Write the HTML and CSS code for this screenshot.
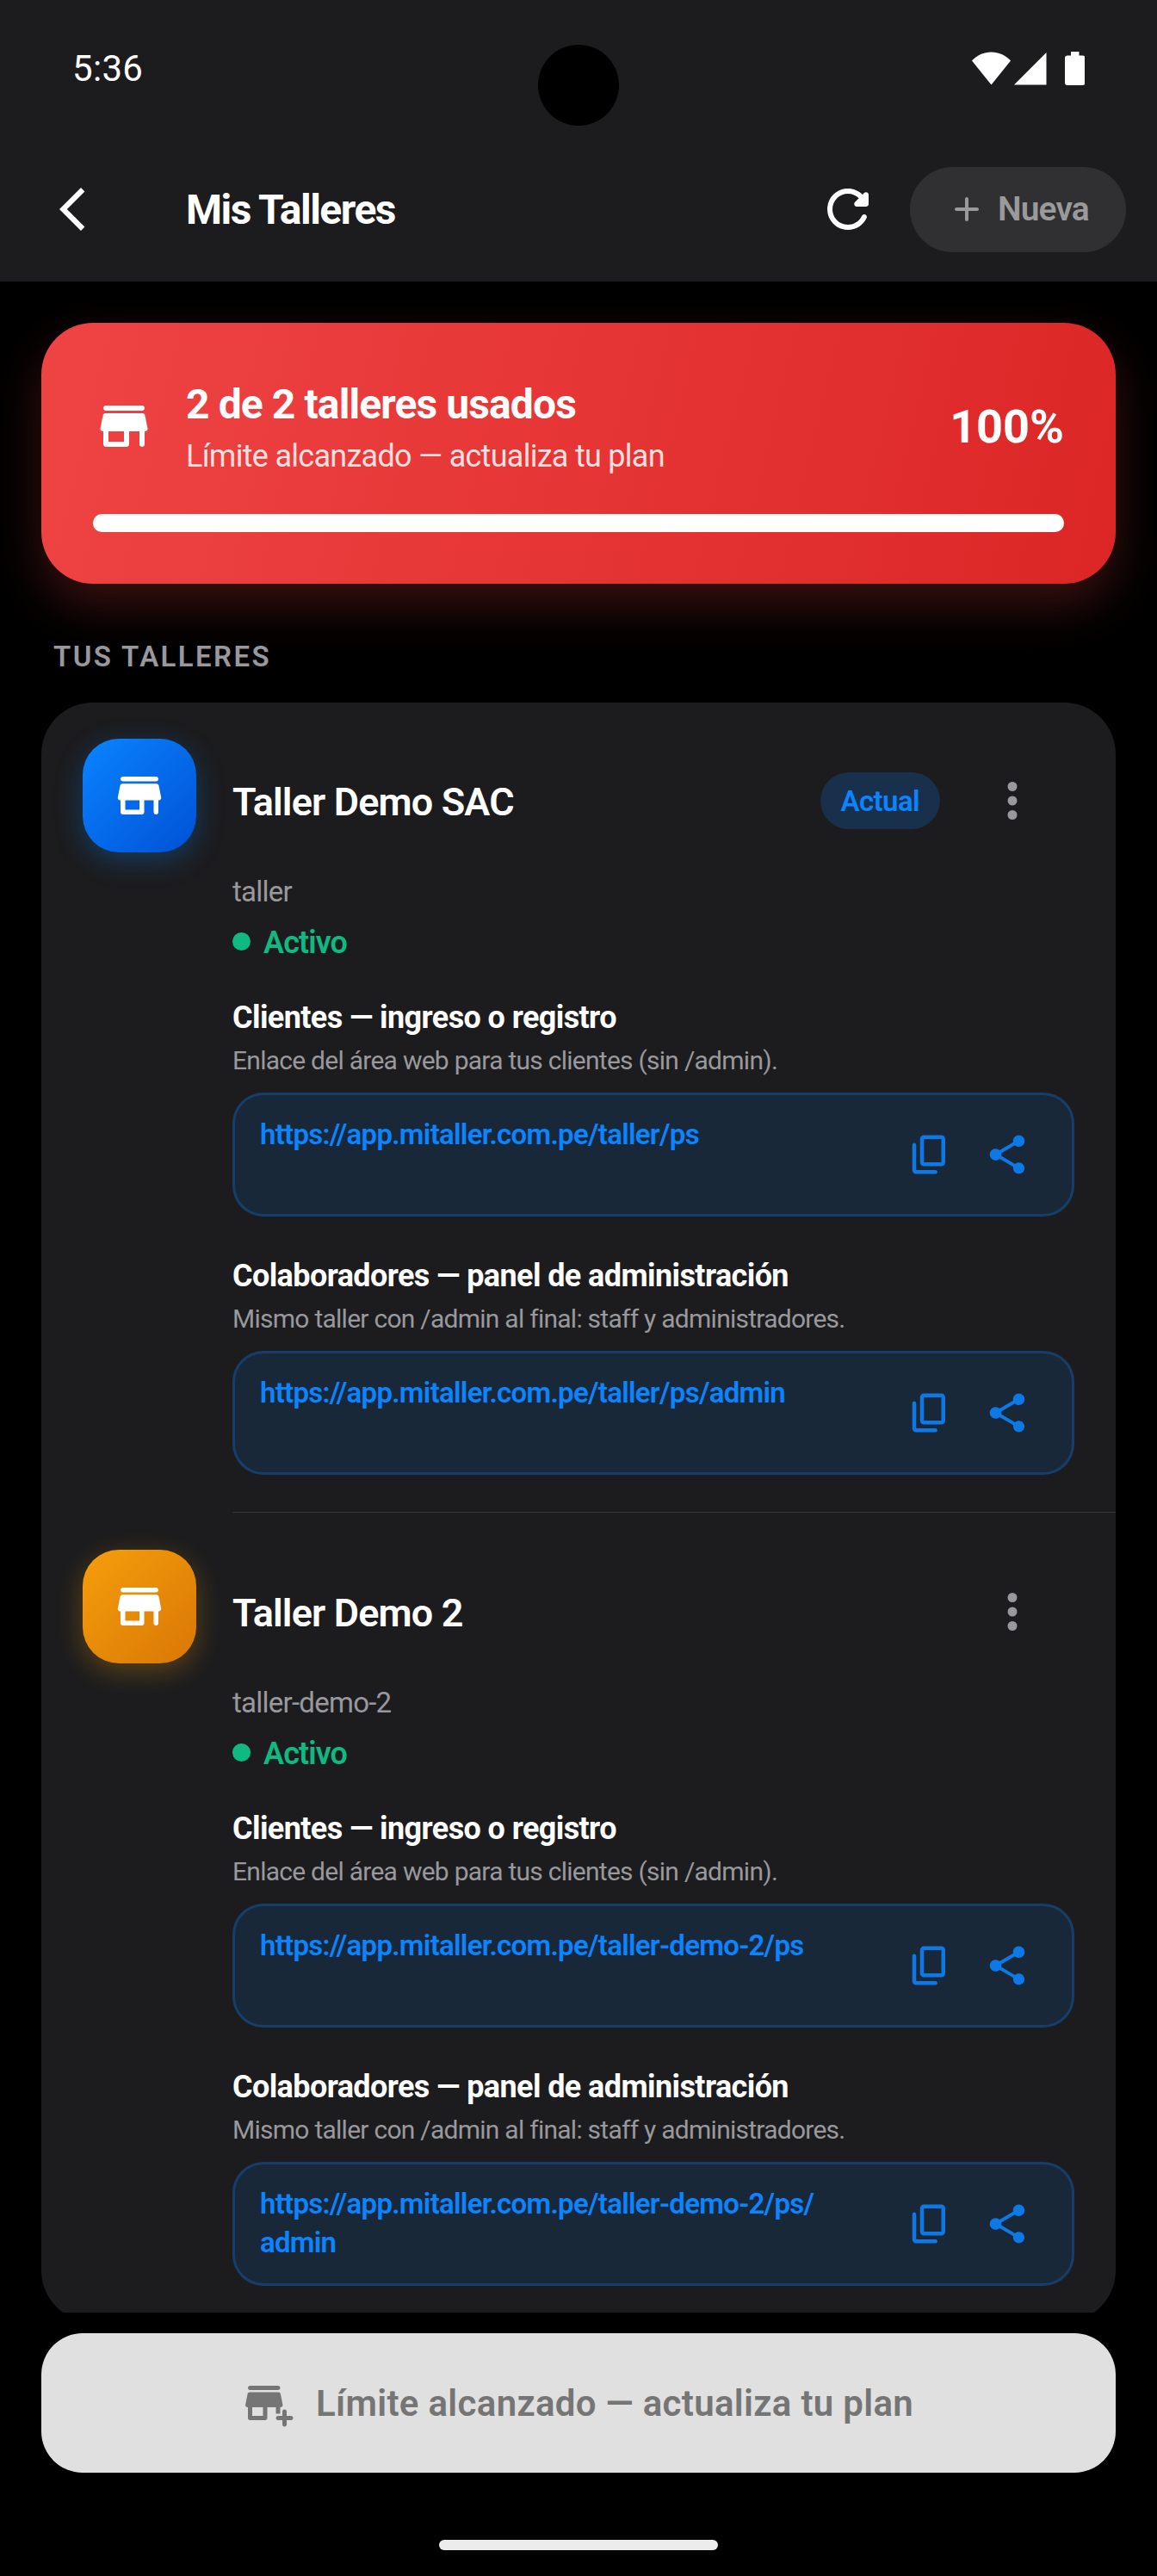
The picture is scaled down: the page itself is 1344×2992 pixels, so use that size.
FILE: index.html
```html
<!DOCTYPE html>
<html lang="es">
  <head>
    <meta charset="UTF-8" />
    <meta name="viewport" content="width=device-width, initial-scale=1.0" />
    <title>Mis Talleres</title>
    <link rel="stylesheet" href="styles.css">
  </head>
  <body>
    <svg class="sprite" width="0" height="0">
      <symbol id="store" viewBox="0 0 24 24">
        <path d="M5 6h14c.55 0 1-.45 1-1s-.45-1-1-1H5c-.55 0-1 .45-1 1s.45 1 1 1zm15.16 1.8c-.09-.46-.5-.8-.98-.8H4.82c-.48 0-.89.34-.98.8l-1 5c-.12.62.35 1.2.98 1.2H4v5c0 .55.45 1 1 1h8c.55 0 1-.45 1-1v-5h4v5c0 .55.45 1 1 1s1-.45 1-1v-5h.18c.63 0 1.1-.58.98-1.2l-1-5zM12 18H6v-4h6v4z" />
      </symbol>
      <symbol id="more" viewBox="0 0 24 24">
        <circle cx="12" cy="6" r="2" />
        <circle cx="12" cy="12" r="2" />
        <circle cx="12" cy="18" r="2" />
      </symbol>
      <symbol id="copy" viewBox="0 0 24 24">
        <path d="M15 20H5V7c0-.55-.45-1-1-1s-1 .45-1 1v13c0 1.1.9 2 2 2h10c.55 0 1-.45 1-1s-.45-1-1-1zm5-4V4c0-1.1-.9-2-2-2H9c-1.1 0-2 .9-2 2v12c0 1.1.9 2 2 2h9c1.1 0 2-.9 2-2zm-2 0H9V4h9v12z" />
      </symbol>
      <symbol id="share" viewBox="0 0 24 24">
        <path d="M18 16.08c-.76 0-1.44.3-1.96.77L8.91 12.7c.05-.23.09-.46.09-.7s-.04-.47-.09-.7l7.05-4.11c.54.5 1.25.81 2.04.81 1.66 0 3-1.34 3-3s-1.34-3-3-3-3 1.34-3 3c0 .24.04.47.09.7L8.04 9.81C7.5 9.31 6.79 9 6 9c-1.66 0-3 1.34-3 3s1.34 3 3 3c.79 0 1.5-.31 2.04-.81l7.12 4.16c-.05.21-.08.43-.08.65 0 1.61 1.31 2.92 2.92 2.92s2.92-1.31 2.92-2.92-1.31-2.92-2.92-2.92z" />
      </symbol>
    </svg>

    <header class="top">
      <div class="status-bar">
        <span class="clock">5:36</span>
        <svg class="signals" viewBox="0 0 131 39">
          <path d="M0 10.500C6 4 14 .5 22.500.5S39 4 45 10.500L22.500 38.500z" />
          <path d="M49 38.500 86.500 1v37.500z" />
          <path d="M115 0h9.500v4.500h4q3 0 3 3V36q0 3-3 3h-17.500q-3 0-3-3V7.500q0-3 3-3h4z" />
        </svg>
      </div>
      <div class="camera"></div>
      <div class="app-bar">
        <svg class="back" viewBox="0 0 24 24"><path d="M17.770 3.770 16 2 6 12l10 10 1.770-1.770L9.540 12z" /></svg>
        <h1>Mis Talleres</h1>
        <svg class="refresh" viewBox="0 0 24 24"><path d="M17.650 6.350c-1.630-1.630-3.940-2.570-6.480-2.310-3.670.37-6.690 3.350-7.100 7.020C3.520 15.910 7.270 20 12 20c3.190 0 5.930-1.870 7.210-4.560.32-.67-.16-1.440-.9-1.440-.37 0-.72.2-.88.53-1.130 2.430-3.840 3.970-6.800 3.310-2.220-.49-4.010-2.300-4.480-4.520C5.310 9.440 8.260 6 12 6c1.660 0 3.140.69 4.220 1.780l-1.510 1.510c-.63.63-.19 1.710.7 1.710H19c.55 0 1-.45 1-1V6.410c0-.89-1.080-1.340-1.710-.71l-.64.65z" /></svg>
        <button class="new-btn">
          <svg viewBox="0 0 24 24"><path d="M18 13h-5v5c0 .55-.45 1-1 1s-1-.45-1-1v-5H6c-.55 0-1-.45-1-1s.45-1 1-1h5V6c0-.55.45-1 1-1s1 .45 1 1v5h5c.55 0 1 .45 1 1s-.45 1-1 1z" /></svg>
          <span>Nueva</span>
        </button>
      </div>
    </header>

    <main>
      <section class="usage">
        <div class="usage-row">
          <svg class="usage-icon"><use href="#store" /></svg>
          <div class="usage-text">
            <h2>2 de 2 talleres usados</h2>
            <p>Límite alcanzado — actualiza tu plan</p>
          </div>
          <strong>100%</strong>
        </div>
        <div class="progress"><div class="progress-fill" style="width: 100%"></div></div>
      </section>

      <h3 class="label">TUS TALLERES</h3>

      <section class="list">
        <article class="item">
          <div class="avatar blue"><svg><use href="#store" /></svg></div>
          <div class="info">
            <div class="name-row">
              <h4>Taller Demo SAC</h4>
              <span class="current">Actual</span>
              <span class="menu"><svg><use href="#more" /></svg></span>
            </div>
            <p class="slug">taller</p>
            <p class="state"><i></i><span>Activo</span></p>
            <div class="access">
              <h5>Clientes — ingreso o registro</h5>
              <p>Enlace del área web para tus clientes (sin /admin).</p>
              <div class="link">
                <a>https://app.mitaller.com.pe/taller/ps</a>
                <span class="action"><svg><use href="#copy" /></svg></span>
                <span class="action"><svg><use href="#share" /></svg></span>
              </div>
            </div>
            <div class="access">
              <h5>Colaboradores — panel de administración</h5>
              <p>Mismo taller con /admin al final: staff y administradores.</p>
              <div class="link">
                <a>https://app.mitaller.com.pe/taller/ps/admin</a>
                <span class="action"><svg><use href="#copy" /></svg></span>
                <span class="action"><svg><use href="#share" /></svg></span>
              </div>
            </div>
          </div>
        </article>
        <div class="divider"></div>
        <article class="item">
          <div class="avatar orange"><svg><use href="#store" /></svg></div>
          <div class="info">
            <div class="name-row">
              <h4>Taller Demo 2</h4>
              <span class="menu"><svg><use href="#more" /></svg></span>
            </div>
            <p class="slug">taller-demo-2</p>
            <p class="state"><i></i><span>Activo</span></p>
            <div class="access">
              <h5>Clientes — ingreso o registro</h5>
              <p>Enlace del área web para tus clientes (sin /admin).</p>
              <div class="link">
                <a>https://app.mitaller.com.pe/taller-demo-2/ps</a>
                <span class="action"><svg><use href="#copy" /></svg></span>
                <span class="action"><svg><use href="#share" /></svg></span>
              </div>
            </div>
            <div class="access">
              <h5>Colaboradores — panel de administración</h5>
              <p>Mismo taller con /admin al final: staff y administradores.</p>
              <div class="link">
                <a>https://app.mitaller.com.pe/taller-demo-2/ps/<wbr>admin</a>
                <span class="action"><svg><use href="#copy" /></svg></span>
                <span class="action"><svg><use href="#share" /></svg></span>
              </div>
            </div>
          </div>
        </article>
      </section>
    </main>

    <footer>
      <button class="limit-btn">
        <svg viewBox="0 0 24 24"><path d="M3 6h13c.55 0 1-.45 1-1s-.45-1-1-1H3c-.55 0-1 .45-1 1s.45 1 1 1zm12 11h2v-3h.18c.63 0 1.100-.58.98-1.200l-1-5c-.09-.46-.5-.8-.98-.8H2.820c-.48 0-.89.34-.98.8l-1 5c-.12.620.35 1.200.98 1.200H2v5c0 .55.45 1 1 1h7c.55 0 1-.45 1-1v-5h4v3zm-6 1H4v-4h5v4zm13 0h-2v-2c0-.55-.45-1-1-1s-1 .45-1 1v2h-2c-.55 0-1 .45-1 1s.45 1 1 1h2v2c0 .55.45 1 1 1s1-.45 1-1v-2h2c.55 0 1-.45 1-1s-.45-1-1-1z" /></svg>
        <span>Límite alcanzado — actualiza tu plan</span>
      </button>
      <div class="home-bar"></div>
    </footer>
  </body>
</html>
```
FILE: styles.css
```css
* {
  margin: 0;
  padding: 0;
  box-sizing: border-box;
}

body {
  display: flex;
  flex-direction: column;
  width: 1344px;
  height: 2992px;
  background: #000000;
  color: #ffffff;
  font-family: "Roboto", sans-serif;
  overflow: hidden;
}

svg {
  display: block;
  flex-shrink: 0;
  fill: currentColor;
}

.sprite {
  position: absolute;
}

button {
  border: none;
  font-family: inherit;
}

/* header */
.top {
  position: relative;
  height: 327px;
  background: #1c1c1e;
}

.status-bar {
  display: flex;
  justify-content: space-between;
  align-items: center;
  height: 159px;
  padding: 0 84px;
}

.clock {
  font-size: 42px;
  letter-spacing: 0.3px;
}

.signals {
  width: 131px;
  height: 39px;
}

.camera {
  position: absolute;
  top: 52px;
  left: 625px;
  width: 94px;
  height: 94px;
  border-radius: 50%;
  background: #000000;
}

.app-bar {
  display: flex;
  align-items: center;
  height: 168px;
  padding: 0 36px 0 54px;
}

.back {
  width: 60px;
  height: 60px;
  margin-right: 102px;
}

.app-bar h1 {
  flex: 1;
  font-size: 48px;
  font-weight: 700;
  letter-spacing: -1.5px;
}

.refresh {
  width: 72px;
  height: 72px;
  margin-right: 36px;
}

.new-btn {
  display: flex;
  align-items: center;
  gap: 12px;
  width: 251px;
  height: 99px;
  padding-left: 42px;
  border-radius: 50px;
  background: #303032;
  color: #9a9a9b;
  font-size: 39px;
  font-weight: 600;
  letter-spacing: -0.9px;
}

.new-btn svg {
  width: 48px;
  height: 48px;
}

/* content */
main {
  flex: 1;
  min-height: 0;
  padding: 48px 48px 0;
  overflow: hidden;
}

.usage {
  height: 303px;
  padding: 60px;
  border-radius: 60px;
  background: linear-gradient(103.6deg, #ef4444, #dc2626);
  box-shadow: 0 24px 58px rgba(239, 68, 68, 0.25);
}

.usage-row {
  display: flex;
  align-items: center;
  height: 120px;
  margin-bottom: 42px;
}

.usage-icon {
  width: 72px;
  height: 72px;
  margin-right: 36px;
}

.usage-text {
  flex: 1;
}

.usage-text h2 {
  font-size: 48px;
  line-height: 69px;
  letter-spacing: -0.9px;
}

.usage-text p {
  padding-top: 2px;
  color: rgba(255, 255, 255, 0.85);
  font-size: 36px;
  line-height: 49px;
  letter-spacing: -0.72px;
}

.usage strong {
  font-size: 54px;
}

.progress {
  height: 21px;
  border-radius: 11px;
  background: rgba(255, 255, 255, 0.3);
}

.progress-fill {
  height: 100%;
  border-radius: 11px;
  background: #ffffff;
}

.label {
  padding: 63px 14px 31px;
  color: #98989d;
  font-size: 33px;
  font-weight: 600;
  line-height: 44px;
  letter-spacing: 2.4px;
}

.list {
  border-radius: 60px;
  background: #1c1c1e;
}

.item {
  display: flex;
  gap: 42px;
  padding: 42px 48px 42px;
}

.avatar {
  display: flex;
  flex-shrink: 0;
  align-items: center;
  justify-content: center;
  width: 132px;
  height: 132px;
  border-radius: 42px;
}

.avatar svg {
  width: 66px;
  height: 66px;
}

.blue {
  background: linear-gradient(135deg, #0a84ff, #0051d5);
  box-shadow: 0 9px 32px rgba(10, 132, 255, 0.3);
}

.orange {
  background: linear-gradient(135deg, #f59e0b, #d97706);
  box-shadow: 0 9px 32px rgba(245, 158, 11, 0.3);
}

.info {
  flex: 1;
}

.name-row {
  display: flex;
  align-items: center;
  height: 144px;
}

.name-row h4 {
  flex: 1;
  padding-top: 2px;
  font-size: 45px;
  font-weight: 600;
  letter-spacing: -0.85px;
}

.current {
  height: 66px;
  margin-right: 12px;
  padding: 0 24px;
  border-radius: 33px;
  background: rgba(10, 132, 255, 0.2);
  color: #0a84ff;
  font-size: 33px;
  font-weight: 600;
  line-height: 67px;
  letter-spacing: -0.6px;
}

.menu {
  display: flex;
  align-items: center;
  justify-content: center;
  width: 144px;
  height: 144px;
  color: #98989d;
}

.menu svg {
  width: 66px;
  height: 66px;
}

.slug {
  margin-top: 12px;
  color: #98989d;
  font-size: 33px;
  line-height: 43px;
  letter-spacing: -0.75px;
}

.state {
  display: flex;
  align-items: center;
  gap: 15px;
  height: 44px;
  margin: 14px 0 44px;
  color: #10b981;
  font-size: 36px;
  font-weight: 600;
  letter-spacing: -0.9px;
}

.state span {
  padding-top: 3px;
}

.state i {
  width: 21px;
  height: 21px;
  border-radius: 50%;
  background: #10b981;
}

.access + .access {
  margin-top: 46px;
}

.access h5 {
  font-size: 36px;
  line-height: 47px;
  letter-spacing: -0.6px;
}

.access p {
  margin: 5px 0 16px;
  color: #98989d;
  font-size: 30px;
  line-height: 42px;
  letter-spacing: -0.74px;
}

.link {
  display: flex;
  align-items: center;
  height: 144px;
  padding: 0 30px 0 29px;
  border: 3px solid rgba(10, 132, 255, 0.25);
  border-radius: 36px;
  background: rgba(10, 132, 255, 0.12);
}

.link a {
  flex: 1;
  height: 92px;
  margin-right: 12px;
  color: #0a84ff;
  font-size: 33px;
  font-weight: 600;
  line-height: 45px;
  letter-spacing: -0.73px;
}

.action {
  display: flex;
  justify-content: center;
  width: 90px;
  color: rgba(10, 132, 255, 0.88);
}

.action svg {
  width: 54px;
  height: 54px;
}

.divider {
  height: 3px;
  margin-left: 222px;
  padding: 1px 0;
  background: #38383a;
  background-clip: content-box;
}

/* footer */
footer {
  display: flex;
  flex-direction: column;
  align-items: center;
  height: 306px;
  padding: 24px 48px 0;
}

.limit-btn {
  display: flex;
  align-items: center;
  justify-content: center;
  gap: 24px;
  width: 100%;
  height: 162px;
  border-radius: 48px;
  background: #e0e0e0;
  color: #757575;
  font-size: 42px;
  font-weight: 600;
  letter-spacing: 0.3px;
}

.limit-btn svg {
  width: 60px;
  height: 60px;
}

.home-bar {
  width: 324px;
  height: 12px;
  margin-top: 78px;
  border-radius: 6px;
  background: #ececec;
}
```
